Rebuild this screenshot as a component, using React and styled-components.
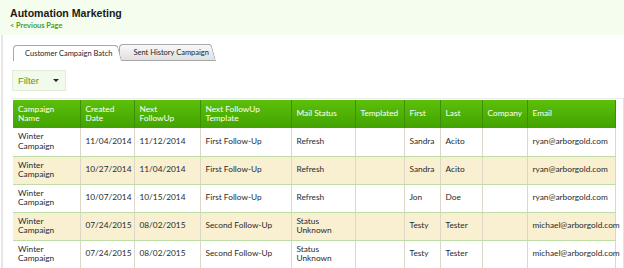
import React from 'react';
import styled, { createGlobalStyle } from 'styled-components';

const rows = [
  { campaign: "Winter Campaign", created: "11/04/2014", next: "11/12/2014", template: "First Follow-Up", status: "Refresh", templated: "", first: "Sandra", last: "Acito", company: "", email: "ryan@arborgold.com" },
  { campaign: "Winter Campaign", created: "10/27/2014", next: "11/04/2014", template: "First Follow-Up", status: "Refresh", templated: "", first: "Sandra", last: "Acito", company: "", email: "ryan@arborgold.com" },
  { campaign: "Winter Campaign", created: "10/07/2014", next: "10/15/2014", template: "First Follow-Up", status: "Refresh", templated: "", first: "Jon", last: "Doe", company: "", email: "ryan@arborgold.com" },
  { campaign: "Winter Campaign", created: "07/24/2015", next: "08/02/2015", template: "Second Follow-Up", status: "Status Unknown", templated: "", first: "Testy", last: "Tester", company: "", email: "michael@arborgold.com" },
  { campaign: "Winter Campaign", created: "07/24/2015", next: "08/02/2015", template: "Second Follow-Up", status: "Status Unknown", templated: "", first: "Testy", last: "Tester", company: "", email: "michael@arborgold.com" }
];

const columns = [
  { key: "campaign", title: "Campaign Name", width: 67 },
  { key: "created", title: "Created Date", width: 54 },
  { key: "next", title: "Next FollowUp", width: 66 },
  { key: "template", title: "Next FollowUp Template", width: 91 },
  { key: "status", title: "Mail Status", width: 64 },
  { key: "templated", title: "Templated", width: 49 },
  { key: "first", title: "First", width: 36 },
  { key: "last", title: "Last", width: 42 },
  { key: "company", title: "Company", width: 45 },
  { key: "email", title: "Email", width: 88 }
];

const GlobalStyle = createGlobalStyle`
  body {
    margin: 0;
    background: #fff;
    font-family: "Lato", "Open Sans", sans-serif;
  }
`;

const Page = styled.div`
  width: 624px;
  height: 268px;
  overflow: hidden;
`;

const TopBar = styled.div`
  height: 35px;
  background: #f4fdee;
  padding: 7px 0 0 10px;
  box-sizing: border-box;
`;

const Title = styled.h1`
  margin: 0;
  font-family: "Liberation Sans", Arial, sans-serif;
  font-size: 10.6px;
  font-weight: bold;
  line-height: 13px;
  color: #1a1a1a;
`;

const BackLink = styled.a`
  display: block;
  margin-top: 1px;
  font-family: "Lato", sans-serif;
  font-size: 7.4px;
  font-weight: bold;
  color: #4d9c22;
  text-decoration: none;
`;

const Body = styled.div`
  margin-left: 1px;
  border-left: 2px solid #e6e6e6;
  padding: 9px 0 0 9px;
  height: 233px;
  box-sizing: border-box;
`;

const TabBar = styled.div`
  display: flex;
  align-items: flex-end;
  padding-left: 1px;
`;

const Tab = styled.div`
  position: relative;
  z-index: ${p => (p.$active ? 2 : 1)};
  height: 15px;
  margin-left: ${p => (p.$active ? '0' : '-3px')};
  margin-right: 6px;
  padding: 0 ${p => (p.$active ? '4px' : '1px')} 0 ${p => (p.$active ? '11px' : '13px')};
  font-size: 7.5px;
  line-height: 15px;
  color: #1e1e1e;
  border: 1px solid #a8a8a8;
  border-right: none;
  border-bottom: ${p => (p.$active ? 'none' : '1px solid #a8a8a8')};
  border-radius: 4px 0 0 0;
  background: ${p => (p.$active ? '#fff' : 'linear-gradient(#f8f8f8, #e0e0e0)')};

  &::after {
    content: '';
    position: absolute;
    top: -1px;
    bottom: ${p => (p.$active ? '0' : '-1px')};
    right: -6px;
    width: 10px;
    background: ${p => (p.$active ? '#fff' : 'linear-gradient(#f8f8f8, #e0e0e0)')};
    border-top: 1px solid #a8a8a8;
    border-right: 1px solid #a8a8a8;
    border-bottom: ${p => (p.$active ? 'none' : '1px solid #a8a8a8')};
    border-radius: 0 3px 0 0;
    transform: skewX(15deg);
    transform-origin: bottom left;
  }
`;

const TabLabel = styled.span`
  position: relative;
  z-index: 1;
`;

const FilterBox = styled.div`
  display: flex;
  align-items: center;
  justify-content: space-between;
  width: 54px;
  height: 21px;
  margin-top: 9px;
  padding: 0 5px;
  box-sizing: border-box;
  background: #f2fbeb;
  border: 1px solid #e2ebd9;
  font-family: "Liberation Sans", Arial, sans-serif;
  font-size: 9.4px;
  color: #4c9a2a;
`;

const Caret = styled.span`
  width: 0;
  height: 0;
  margin-right: 1px;
  border-left: 3px solid transparent;
  border-right: 3px solid transparent;
  border-top: 3px solid #222;
`;

const GridWrap = styled.div`
  margin-top: 7px;
  border-top: 1px solid #ececec;
  border-right: 1px solid #e2e2e2;
  padding: 1px 5px 0 1px;
`;

const Table = styled.table`
  width: 602px;
  table-layout: fixed;
  border-collapse: collapse;
  font-family: "Lato", "Open Sans", sans-serif;
  font-size: 8.3px;
`;

const HeadCell = styled.th`
  height: 28px;
  padding: 0 ${p => (p.$tight ? '8px' : '5px')} 0 5px;
  box-sizing: border-box;
  text-align: left;
  font-weight: normal;
  line-height: 9.5px;
  color: #fff;
  background: linear-gradient(#5cbf0a, #42a300);
  border-right: 1px solid #3d8f06;
`;

const Row = styled.tr`
  background: ${p => (p.$alt ? '#f9efd1' : '#fff')};
`;

const Cell = styled.td`
  height: 28px;
  padding: 0 5px;
  box-sizing: border-box;
  line-height: 9.5px;
  color: #2a2a2a;
  vertical-align: middle;
  border-right: 1px solid #dcd7c8;
  border-bottom: 1px solid #bedca6;
  white-space: ${p => (p.$wrap ? 'normal' : 'nowrap')};
`;

const App = () => {
  const getHead = () => columns.map(col => (
    <HeadCell key={col.key} $tight={col.key === "next"}>{col.title}</HeadCell>
  ));

  const getRows = () => rows.map((row, idx) => (
    <Row key={idx} $alt={idx % 2 === 1}>
      {columns.map(col => (
        <Cell key={col.key} $wrap={col.key === "campaign" || col.key === "status"}>
          {row[col.key]}
        </Cell>
      ))}
    </Row>
  ));

  return (
    <Page>
      <GlobalStyle />
      <TopBar>
        <Title>Automation Marketing</Title>
        <BackLink href="#">&lt; Previous Page</BackLink>
      </TopBar>
      <Body>
        <TabBar>
          <Tab $active><TabLabel>Customer Campaign Batch</TabLabel></Tab>
          <Tab><TabLabel>Sent History Campaign</TabLabel></Tab>
        </TabBar>
        <FilterBox>
          <span>Filter</span>
          <Caret />
        </FilterBox>
        <GridWrap>
          <Table>
            <colgroup>
              {columns.map(col => <col key={col.key} style={{ width: col.width }} />)}
            </colgroup>
            <thead>
              <tr>{getHead()}</tr>
            </thead>
            <tbody>{getRows()}</tbody>
          </Table>
        </GridWrap>
      </Body>
    </Page>
  );
};

export default App;
